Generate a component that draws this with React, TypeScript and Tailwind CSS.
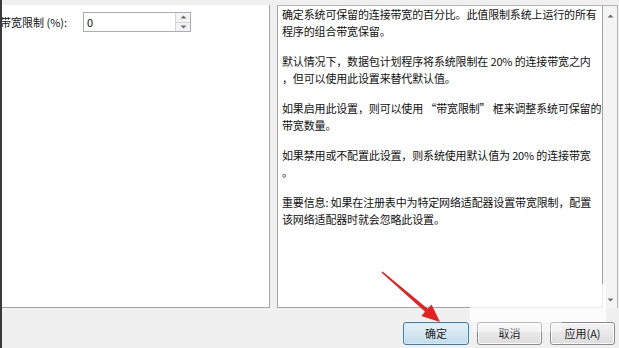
import React from "react";

const font = { fontFamily: '"Noto Sans CJK SC", "Liberation Sans", sans-serif' };

const paragraphs: string[][] = [
  ["确定系统可保留的连接带宽的百分比。此值限制系统上运行的所有", "程序的组合带宽保留。"],
  ["默认情况下，数据包计划程序将系统限制在 20% 的连接带宽之内", "，但可以使用此设置来替代默认值。"],
  ["如果启用此设置，则可以使用 “带宽限制” 框来调整系统可保留的", "带宽数量。"],
  ["如果禁用或不配置此设置，则系统使用默认值为 20% 的连接带宽", "。"],
  ["重要信息: 如果在注册表中为特定网络适配器设置带宽限制，配置", "该网络适配器时就会忽略此设置。"],
];

function Triangle({ up, className }: { up?: boolean; className?: string }) {
  return (
    <svg width="7" height="4" viewBox="0 0 7 4" className={className}>
      {up ? <path d="M0.5 3.5 L3.5 0.5 L6.5 3.5 Z" fill="#6d6d6d" /> : <path d="M0.5 0.5 L3.5 3.5 L6.5 0.5 Z" fill="#6d6d6d" />}
    </svg>
  );
}

function DialogButton({ label, primary }: { label: string; primary?: boolean }) {
  return (
    <button
      className={
        "h-[23px] rounded-[3px] border text-[11px] text-[#1e1e1e] leading-none " +
        (primary
          ? "w-[66px] border-[#3c7fb1] bg-gradient-to-b from-[#e5f1f8] to-[#c4dcea] shadow-[inset_0_0_0_1px_#d6ecf7]"
          : "w-[65px] border-[#8a8a8a] bg-gradient-to-b from-[#f4f4f4] to-[#dcdcdc] shadow-[inset_0_0_0_1px_#fbfbfb]")
      }
    >
      {label}
    </button>
  );
}

export default function App() {
  return (
    <div
      className="relative w-[619px] h-[348px] overflow-hidden bg-[#f0f0f0] border-l-2 border-[#3a3a3a]"
      style={font}
    >
      <div className="flex pt-[5px] h-[308px]">
        {/* left options panel */}
        <div className="w-[268px] h-full bg-white border-r border-b border-[#a3a3a3] pt-[7px]">
          <div className="flex items-center h-[20px]">
            <span className="w-[83px] -ml-[2px] text-[11px] text-[#111] whitespace-nowrap">带宽限制 (%):</span>
            <div className="flex w-[108px] h-[20px] border border-[#abadb3] bg-white">
              <span className="flex-1 pl-[3px] text-[11px] leading-[18px] text-[#111]">0</span>
              <div className="flex flex-col w-[15px] border-l border-[#d5d5d5]">
                <div className="flex-1 flex items-center justify-center bg-[#f3f3f3] border-b border-[#d5d5d5]">
                  <Triangle up />
                </div>
                <div className="flex-1 flex items-center justify-center bg-[#f3f3f3]">
                  <Triangle />
                </div>
              </div>
            </div>
          </div>
        </div>

        {/* right help panel */}
        <div className="ml-[7px] w-[341px] h-full flex border-t border-r border-[#b4b4b4]">
          <div className="w-[326px] h-full bg-white border-l border-r border-b border-[#a3a3a3] pl-[4px] text-[11px] leading-[17px] tracking-[-0.15px] text-[#111]">
            {paragraphs.map((p, i) => (
              <div key={i} className={i > 0 ? "mt-[13px]" : ""}>
                {p.map((line, j) => (
                  <div key={j} className="whitespace-pre">
                    {line}
                  </div>
                ))}
              </div>
            ))}
          </div>
          <div className="flex-1 flex flex-col items-center justify-between bg-[#f4f4f4] pt-[8px] pb-[6px]">
            <Triangle up />
            <Triangle />
          </div>
        </div>
      </div>

      {/* buttons */}
      <div className="flex justify-end gap-[8px] pr-[4px] mt-[14px]">
        <DialogButton label="确定" primary />
        <DialogButton label="取消" />
        <DialogButton label="应用(A)" />
      </div>

      {/* watermark haze */}
      <div className="absolute left-[468px] top-[284px] w-[136px] h-[38px] bg-white/80" />
      <div className="absolute left-[470px] top-[322px] w-[90px] h-[10px] bg-white/40" />

      {/* red arrow */}
      <svg className="absolute left-0 top-0" width="619" height="348" viewBox="0 0 619 348">
        <polygon
          points="379.4,272.6 423.1,311.7 419.3,316 438,322 429.5,304.4 425.7,308.7 380.6,271.4"
          fill="#e32222"
        />
      </svg>
    </div>
  );
}
